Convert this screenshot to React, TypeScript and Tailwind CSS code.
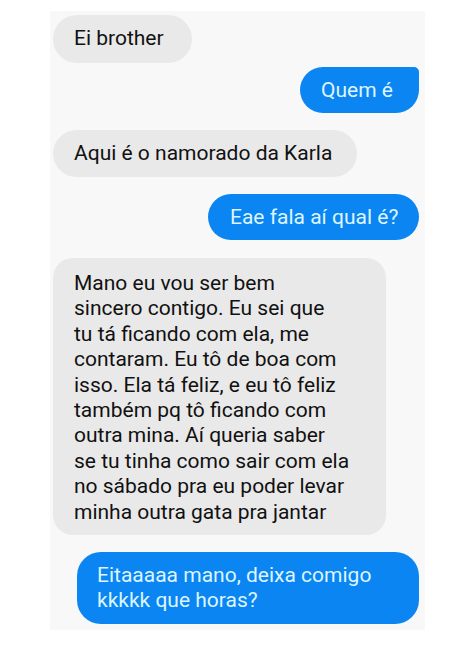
const font = { fontFamily: 'Roboto, "Noto Sans", sans-serif' };

const Gray = ({ children, className = '' }: { children: React.ReactNode; className?: string }) => (
  <div className={`self-start bg-[#e9e9e9] text-[#111111] text-[21px] leading-[25.4px] ${className}`}>{children}</div>
);

const Blue = ({ children, className = '' }: { children: React.ReactNode; className?: string }) => (
  <div className={`self-end bg-[#0a85f2] text-[#dcf5ff] text-[21px] leading-[25px] ${className}`}>{children}</div>
);

export default function App() {
  return (
    <div className="w-full h-[657px] bg-white pt-[11px]" style={font}>
      <div className="ml-[50px] w-[375px] h-[619px] bg-[#f8f8f8] flex flex-col pl-[3px] pr-[6px] pt-[4px]">
        <Gray className="h-[48px] w-[139px] rounded-full pl-[21px] flex items-center">Ei brother</Gray>
        <Blue className="mt-[4px] h-[46px] w-[119px] rounded-[23px] rounded-tr-[5px] pl-[21px] flex items-center">Quem é</Blue>
        <Gray className="mt-[17px] h-[47px] w-[304px] rounded-full pl-[21px] flex items-center">Aqui é o namorado da Karla</Gray>
        <Blue className="mt-[17px] h-[46px] w-[211px] rounded-full pl-[22px] flex items-center">Eae fala aí qual é?</Blue>
        <Gray className="mt-[18px] w-[333px] h-[277px] rounded-[20px] pl-[21px] pr-[4px] pt-[13px] whitespace-nowrap">
          Mano eu vou ser bem
          <br />
          sincero contigo. Eu sei que
          <br />
          tu tá ficando com ela, me
          <br />
          contaram. Eu tô de boa com
          <br />
          isso. Ela tá feliz, e eu tô feliz
          <br />
          também pq tô ficando com
          <br />
          outra mina. Aí queria saber
          <br />
          se tu tinha como sair com ela
          <br />
          no sábado pra eu poder levar
          <br />
          minha outra gata pra jantar
        </Gray>
        <Blue className="mt-[17px] w-[342px] h-[72px] rounded-[24px] pl-[20px] pt-[11px] whitespace-nowrap">
          Eitaaaaa mano, deixa comigo
          <br />
          kkkkk que horas?
        </Blue>
      </div>
    </div>
  );
}
